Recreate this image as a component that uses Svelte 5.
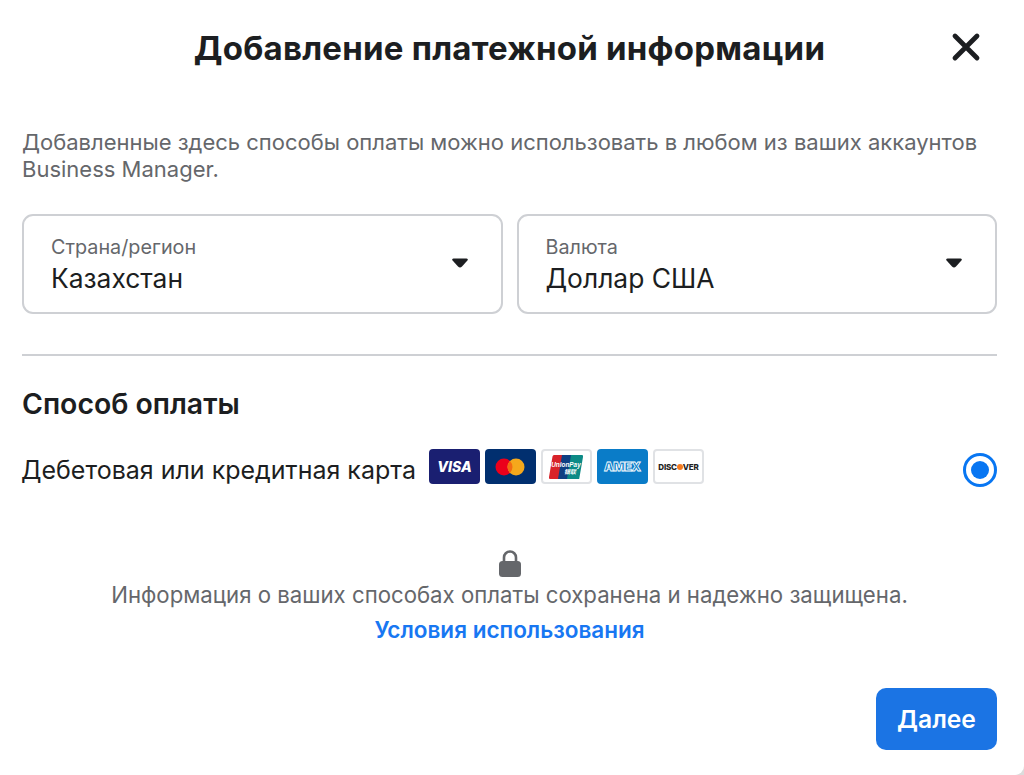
<script>
  const selects = [
    { label: 'Страна/регион', value: 'Казахстан' },
    { label: 'Валюта', value: 'Доллар США' }
  ];
</script>

<main>
  <header>
    <h1>Добавление платежной информации</h1>
    <button class="close" aria-label="Закрыть">
      <svg width="30" height="30" viewBox="0 0 30 30"><path d="M4 4 L26 26 M26 4 L4 26" stroke="#1c1e21" stroke-width="4.8" stroke-linecap="round"/></svg>
    </button>
  </header>

  <p class="intro">Добавленные здесь способы оплаты можно использовать в любом из ваших аккаунтов Business Manager.</p>

  <div class="selects">
    {#each selects as s}
      <div class="select">
        <div>
          <div class="label">{s.label}</div>
          <div class="value">{s.value}</div>
        </div>
        <svg class="caret" width="18" height="12" viewBox="0 0 18 12"><path d="M2.5 1.5 H15.5 Q17.6 1.5 16.4 3.4 L11 9.6 Q9 11.4 7 9.6 L1.6 3.4 Q0.4 1.5 2.5 1.5Z" fill="#1c1e21"/></svg>
      </div>
    {/each}
  </div>

  <hr />

  <h2>Способ оплаты</h2>

  <div class="method">
    <span class="method-name">Дебетовая или кредитная карта</span>
    <div class="cards">
      <span class="card visa">VISA</span>
      <span class="card mc">
        <svg width="32" height="18" viewBox="0 0 32 18"><circle cx="10" cy="9" r="8.5" fill="#eb001b"/><circle cx="22" cy="9" r="8.5" fill="#f5a81c"/><path d="M16 3a8.5 8.5 0 0 1 0 12a8.5 8.5 0 0 1 0-12Z" fill="#f26a12"/></svg>
      </span>
      <span class="card light">
        <svg width="36" height="26" viewBox="0 0 36 26">
          <path d="M6 1 H16 L12 25 H2 Q0.5 25 1 23 L4.5 2.5 Q4.8 1 6 1Z" fill="#d8232a"/>
          <path d="M14 1 H25 L21 25 H10Z" fill="#0f3f82"/>
          <path d="M23 1 H34 Q35.5 1 35 3 L31.2 25 H19Z" fill="#0c8a86"/>
          <text x="18" y="12.5" class="up" text-anchor="middle">UnionPay</text>
          <text x="22" y="20" class="up small" text-anchor="middle">银联</text>
        </svg>
      </span>
      <span class="card amex">AMEX</span>
      <span class="card light discover">DISC<i></i>VER</span>
    </div>
    <span class="radio"><span></span></span>
  </div>

  <div class="secure">
    <svg width="22" height="27" viewBox="0 0 22 27"><path d="M5 12 V7.5 a6 6 0 0 1 12 0 V12" fill="none" stroke="#65676b" stroke-width="2.6"/><rect x="0" y="11" width="22" height="16" rx="3.5" fill="#65676b"/></svg>
    <p>Информация о ваших способах оплаты сохранена и надежно защищена.</p>
    <a href="#terms">Условия использования</a>
  </div>

  <footer>
    <button class="next">Далее</button>
  </footer>
</main>

<style>
  :global(body) {
    margin: 0;
    background: #dcdcdc;
  }
  main {
    box-sizing: border-box;
    width: 1024px;
    height: 775px;
    padding: 0 27px 0 22px;
    background: #fff;
    border-bottom-right-radius: 9px;
    font-family: Inter, "Noto Sans", sans-serif;
    color: #1c1e21;
    overflow: hidden;
  }
  header {
    height: 95px;
    display: flex;
    align-items: center;
    justify-content: center;
    position: relative;
  }
  h1 {
    margin: 0;
    font-size: 33px;
    font-weight: 700;
    letter-spacing: 0.23px;
  }
  .close {
    position: absolute;
    right: 16px;
    top: 32px;
    width: 30px;
    height: 30px;
    padding: 0;
    border: 0;
    background: none;
  }
  .intro {
    margin: 34px 0 0;
    font-size: 22px;
    line-height: 27px;
    color: #65676b;
  }
  .selects {
    display: grid;
    grid-template-columns: 1fr 1fr;
    gap: 14px;
    margin-top: 31px;
  }
  .select {
    box-sizing: border-box;
    height: 100px;
    border: 2px solid #ced0d4;
    border-radius: 11px;
    padding: 18px 32px 0 27px;
    display: flex;
    justify-content: space-between;
    align-items: flex-start;
  }
  .label {
    font-size: 19.8px;
    line-height: 27px;
    color: #65676b;
  }
  .value {
    font-size: 26.4px;
    line-height: 34px;
  }
  .caret {
    margin-top: 23px;
  }
  hr {
    border: 0;
    border-top: 2px solid #ced0d4;
    margin: 40px 0 0;
  }
  h2 {
    margin: 31px 0 0;
    font-size: 28.4px;
    line-height: 34px;
    font-weight: 600;
  }
  .method {
    display: flex;
    align-items: flex-start;
    margin-top: 30px;
  }
  .method-name {
    margin-left: -1px;
    padding-top: 2px;
    font-size: 25px;
    line-height: 34px;
  }
  .cards {
    display: flex;
    gap: 5px;
    margin-left: 13px;
    margin-top: -2px;
  }
  .card {
    box-sizing: border-box;
    width: 51px;
    height: 35px;
    border-radius: 4px;
    display: flex;
    align-items: center;
    justify-content: center;
    font-weight: 800;
    color: #fff;
  }
  .visa {
    background: #1a1f71;
    font-size: 14px;
    font-style: italic;
  }
  .mc {
    background: #012f6f;
  }
  .light {
    background: #fff;
    border: 2px solid #e0e2e5;
  }
  .up {
    font-size: 6.4px;
    font-weight: 700;
    font-style: italic;
    fill: #fff;
    font-family: "Liberation Sans", sans-serif;
  }
  .up.small {
    font-size: 6px;
    font-family: "Noto Sans CJK SC", sans-serif;
  }
  .amex {
    background: #0a7cc8;
    font-size: 12px;
    font-weight: 900;
    letter-spacing: -0.3px;
    color: #0a7cc8;
    -webkit-text-stroke: 0.8px #fff;
  }
  .discover {
    font-size: 8px;
    color: #222;
    letter-spacing: -0.2px;
  }
  .discover i {
    width: 6px;
    height: 6px;
    border-radius: 50%;
    background: #f47a20;
  }
  .radio {
    box-sizing: border-box;
    margin-left: auto;
    margin-top: 2px;
    width: 34px;
    height: 34px;
    border-radius: 50%;
    border: 3px solid #0876f2;
    display: flex;
    align-items: center;
    justify-content: center;
  }
  .radio span {
    width: 18px;
    height: 18px;
    border-radius: 50%;
    background: #0876f2;
  }
  .secure {
    margin-top: 63px;
    display: flex;
    flex-direction: column;
    align-items: center;
    font-size: 22.2px;
  }
  .secure p {
    margin: 3px 0 0;
    line-height: 30px;
    color: #65676b;
  }
  .secure a {
    margin-top: 5px;
    line-height: 30px;
    font-size: 22.5px;
    color: #1877f2;
    font-weight: 600;
    text-decoration: none;
  }
  footer {
    display: flex;
    justify-content: flex-end;
    margin-top: 43px;
  }
  .next {
    width: 121px;
    height: 62px;
    border: 0;
    border-radius: 10px;
    background: #1b74e4;
    color: #fff;
    font: 600 24.6px Inter, "Noto Sans", sans-serif;
  }
</style>
